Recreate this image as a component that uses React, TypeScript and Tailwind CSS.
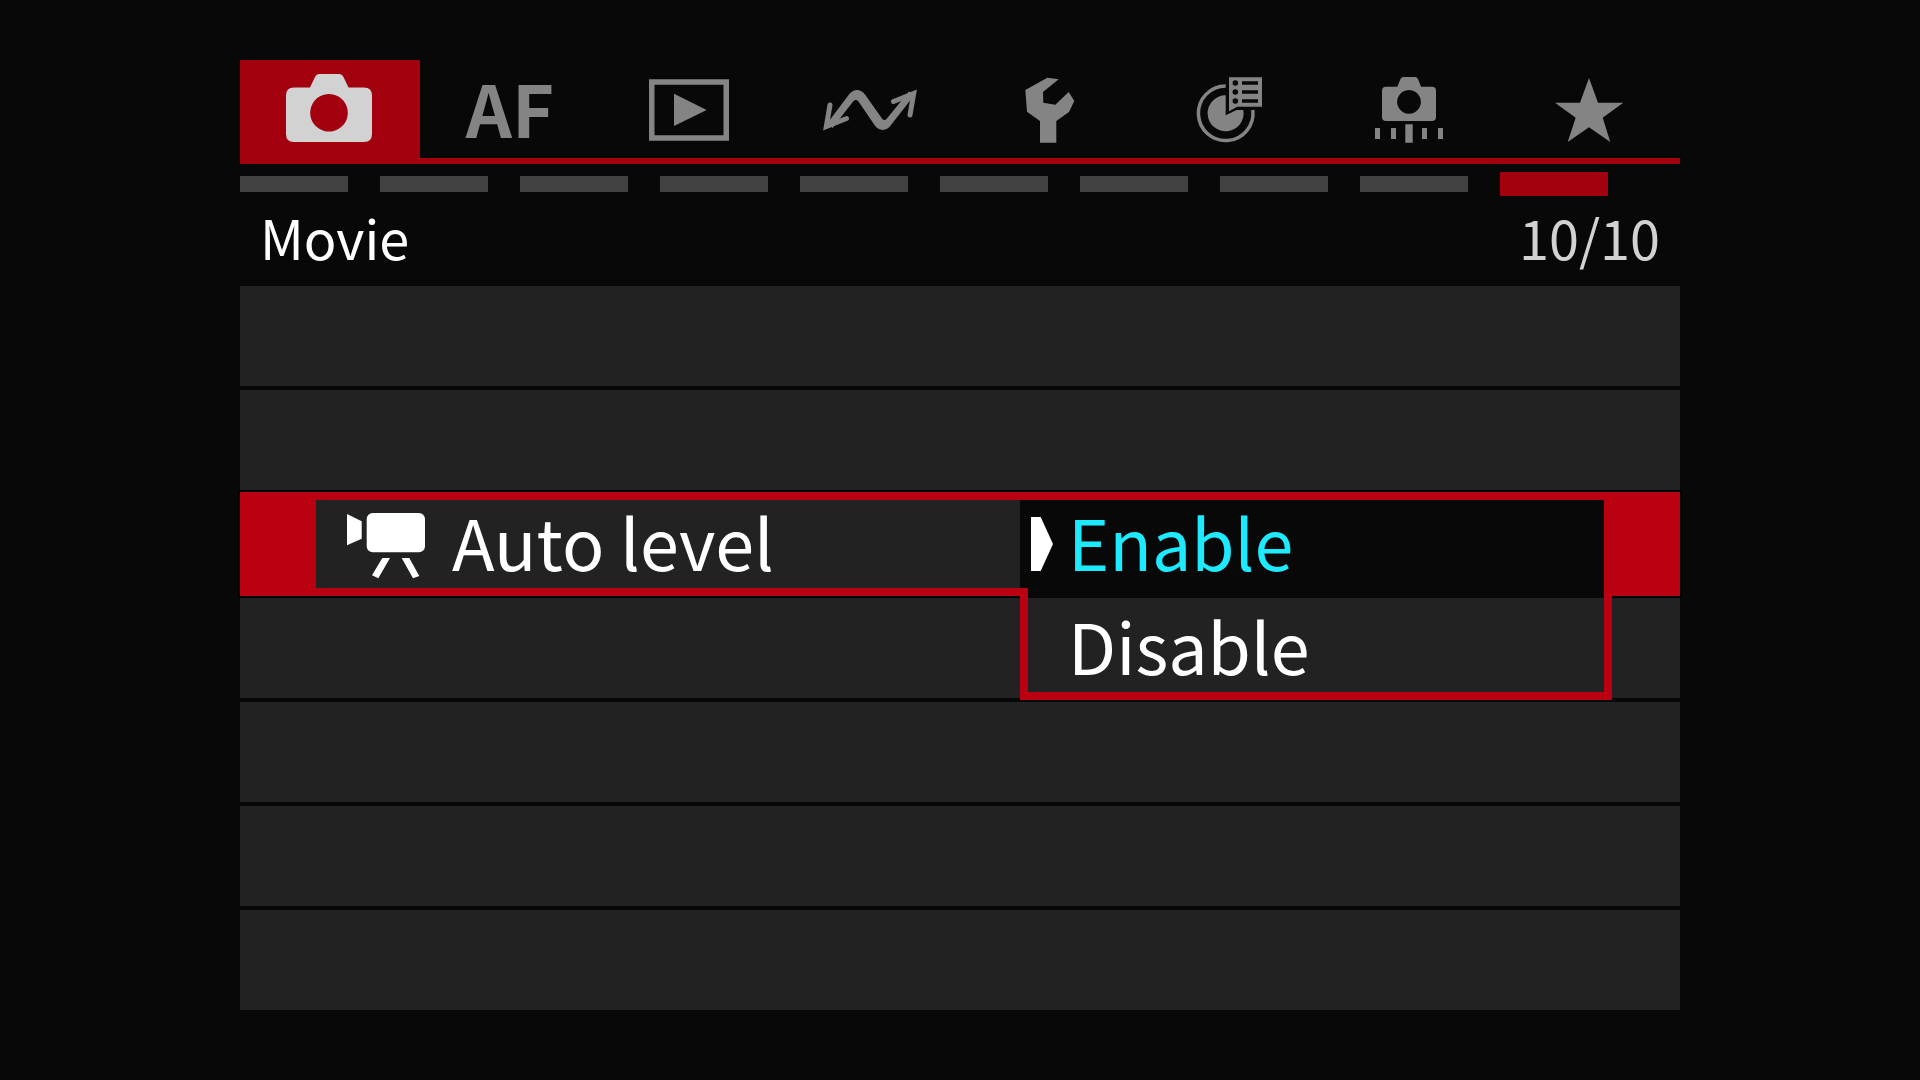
// Camera menu screen: main tabs, page strip and the open "Auto level" setting

import { useState } from 'react';
import type { ReactNode } from 'react';
import clsx from 'clsx';

interface IconProps {
  children: ReactNode;
}

function TabIcon({ children }: IconProps) {
  return (
    <svg viewBox="0 0 96 80" className="w-24 h-20" fill="currentColor" aria-hidden="true">
      {children}
    </svg>
  );
}

const TABS = [
  {
    id: 'shooting',
    label: 'Shooting',
    icon: (
      <TabIcon>
        <path
          fillRule="evenodd"
          d="M12 18.5H28L33 8Q34.5 5 37 5H57Q60 5 61.5 8L66.5 18.5H82Q90 18.5 90 26.5V65Q90 73 82 73H12Q4 73 4 65V26.5Q4 18.5 12 18.5ZM47 25a18.8 18.8 0 1 0 .01 0Z"
        />
      </TabIcon>
    ),
  },
  { id: 'af', label: 'AF', icon: null },
  {
    id: 'playback',
    label: 'Playback',
    icon: (
      <TabIcon>
        <rect x="9.75" y="13" width="74.5" height="56" fill="none" stroke="currentColor" strokeWidth="5.5" />
        <path d="M32 24.7L64.7 41L32 57Z" />
      </TabIcon>
    ),
  },
  {
    id: 'network',
    label: 'Network',
    icon: (
      <TabIcon>
        <path d="M5.5 54L27 25.500C31.500 19.500 38.500 19.500 43 25.500L60 49.500C61.500 51.500 63 51.500 64.500 50L87 22.500L92 26.500L69 56C64.500 62.500 57 62.500 52.500 56L36.500 32.500C35 30.500 33 30.500 31.500 32L10.500 59Z" />
        <path
          d="M8 36L4.3 57.5L24.5 49.5M71.500 32.500L91.700 24.500L88 46"
          fill="none"
          stroke="currentColor"
          strokeWidth="5"
          strokeLinecap="round"
        />
      </TabIcon>
    ),
  },
  {
    id: 'setup',
    label: 'Set-up',
    icon: (
      <TabIcon>
        <path d="M45.3 8.7L56.7 10.3L41 23L41.3 33.7L53.3 35.7L66.7 23L72.3 32L67 43L54.3 52V73.7H38V52L25 42.7L23.3 21Z" />
      </TabIcon>
    ),
  },
  {
    id: 'custom',
    label: 'Custom functions',
    icon: (
      <TabIcon>
        <path d="M43.7 17A27.3 27.3 0 1 0 70.8 41" fill="none" stroke="currentColor" strokeWidth="3.5" />
        <path d="M43.7 26.3A18 18 0 1 0 61.3 41H54.5L43.7 46.3Z" />
        <path d="M47 8.3H80V37.7H55.3L47 42.3Z" />
        <g className="fill-[#080808]">
          <circle cx="53.3" cy="14" r="2.8" />
          <circle cx="53.3" cy="23" r="2.8" />
          <circle cx="53.3" cy="32" r="2.8" />
          <path d="M60 12.2H76V15.7H60ZM60 21.2H76V24.7H60ZM60 30.2H76V33.7H60Z" />
        </g>
      </TabIcon>
    ),
  },
  {
    id: 'controls',
    label: 'Control customization',
    icon: (
      <TabIcon>
        <path
          fillRule="evenodd"
          d="M24 17.7H35.3L38.5 10Q39.5 8 41.5 8H53Q55 8 56 10L59 17.7H70Q74 17.7 74 21.7V48Q74 52 70 52H24Q20 52 20 48V21.7Q20 17.7 24 17.7ZM47 21a11.9 11.9 0 1 0 .01 0Z"
        />
        <path d="M13 59H18V70H13ZM29 59H34V70H29ZM60 59H65V70H60ZM76 59H81V70H76ZM43.3 55.3H50.7V73.7H43.3Z" />
      </TabIcon>
    ),
  },
  {
    id: 'my-menu',
    label: 'My Menu',
    icon: (
      <TabIcon>
        <path d="M47 9L56 33.7H81.3L60.7 48.7L68.3 73L47 58.3L25.7 73L33.7 48.7L13 33.7H38Z" />
      </TabIcon>
    ),
  },
];

const PAGES = [1, 2, 3, 4, 5, 6, 7, 8, 9, 10];

function MovieIcon() {
  return (
    <svg viewBox="0 0 80 68" className="w-20 h-17 shrink-0" fill="currentColor" aria-hidden="true">
      <path d="M1 2L15.7 9.3V26.7L1 33.3Z" />
      <rect x="20.7" y="1" width="58.3" height="39.3" rx="6" />
      <path d="M36.3 46H44L32.3 66.3L26 63.3ZM55.7 46H63.3L73.3 64L67 66.3Z" />
    </svg>
  );
}

function Pointer() {
  return (
    <svg viewBox="0 0 24 56" className="w-6 h-14" fill="currentColor" aria-hidden="true">
      <path d="M1 1H10.7L23 28L10.7 55H1Z" />
    </svg>
  );
}

function EmptyRow() {
  return <li className="h-25 bg-[#222222]" />;
}

function AutoLevelRow() {
  const [value, setValue] = useState('Enable');

  return (
    <li className="relative z-10 -my-0.5 px-19 py-2 bg-[#bb0011] outline-2 outline-black">
      <div className="grid grid-cols-[704fr_584fr] h-22 text-[70px] leading-[82px] text-white">
        <div className="flex items-start gap-[26px] pl-[30px] bg-[#222222]">
          <div className="pt-3">
            <MovieIcon />
          </div>
          <span id="auto-level" className="whitespace-nowrap">Auto level</span>
        </div>

        {/* The list drops over the row below */}
        <div role="listbox" aria-labelledby="auto-level" className="relative bg-[#080808]">
          <button
            role="option"
            aria-selected={value === 'Enable'}
            onClick={() => setValue('Enable')}
            className={clsx(
              'flex items-start w-full h-full pl-[10px] text-left',
              value === 'Enable' ? 'text-[#1de9ff]' : 'text-white'
            )}
          >
            <span className="w-[38px] pt-4 text-white">
              <Pointer />
            </span>
            Enable
          </button>
          <div className="absolute top-full left-0 -right-2 pt-[10px] border-x-8 border-b-8 border-[#bb0011] bg-[#080808]">
            <button
              role="option"
              aria-selected={value === 'Disable'}
              onClick={() => setValue('Disable')}
              className={clsx(
                'block w-full pl-10 text-left leading-[94px] bg-[#222222]',
                value === 'Disable' ? 'text-[#1de9ff]' : 'text-white'
              )}
            >
              Disable
            </button>
          </div>
        </div>
      </div>
    </li>
  );
}

export default function App() {
  const [activeTab, setActiveTab] = useState('shooting');

  return (
    <div className="min-h-screen bg-[#080808] pt-15 font-['Noto_Sans_CJK_JP','Noto_Sans',sans-serif]">
      <main className="w-3/4 mx-auto">
        {/* Main tabs */}
        <nav className="grid grid-cols-8 border-b-6 border-[#a3000f]">
          {TABS.map((tab) => (
            <button
              key={tab.id}
              onClick={() => setActiveTab(tab.id)}
              aria-label={tab.label}
              className={clsx(
                'flex items-center justify-center h-[98px]',
                activeTab === tab.id ? 'bg-[#a3000f] text-[#d2d2d2]' : 'text-[#848484]'
              )}
            >
              {tab.icon ?? <span className="pb-1 text-[72px] leading-[90px] font-bold">{tab.label}</span>}
            </button>
          ))}
        </nav>

        {/* Page strip */}
        <div className="flex items-center gap-8 h-6 mt-2 pr-18">
          {PAGES.map((page) => (
            <div
              key={page}
              className={clsx('flex-1', page === PAGES.length ? 'h-6 bg-[#a3000f]' : 'h-4 bg-[#424242]')}
            />
          ))}
        </div>

        <header className="flex items-center justify-between h-[90px] px-5 pb-2 leading-[82px] text-[54px]">
          <h1 className="text-white">Movie</h1>
          <span className="text-[#d2d2d2]">10/10</span>
        </header>

        <ul className="flex flex-col gap-1">
          <EmptyRow />
          <EmptyRow />
          <AutoLevelRow />
          <EmptyRow />
          <EmptyRow />
          <EmptyRow />
          <EmptyRow />
        </ul>
      </main>
    </div>
  );
}
